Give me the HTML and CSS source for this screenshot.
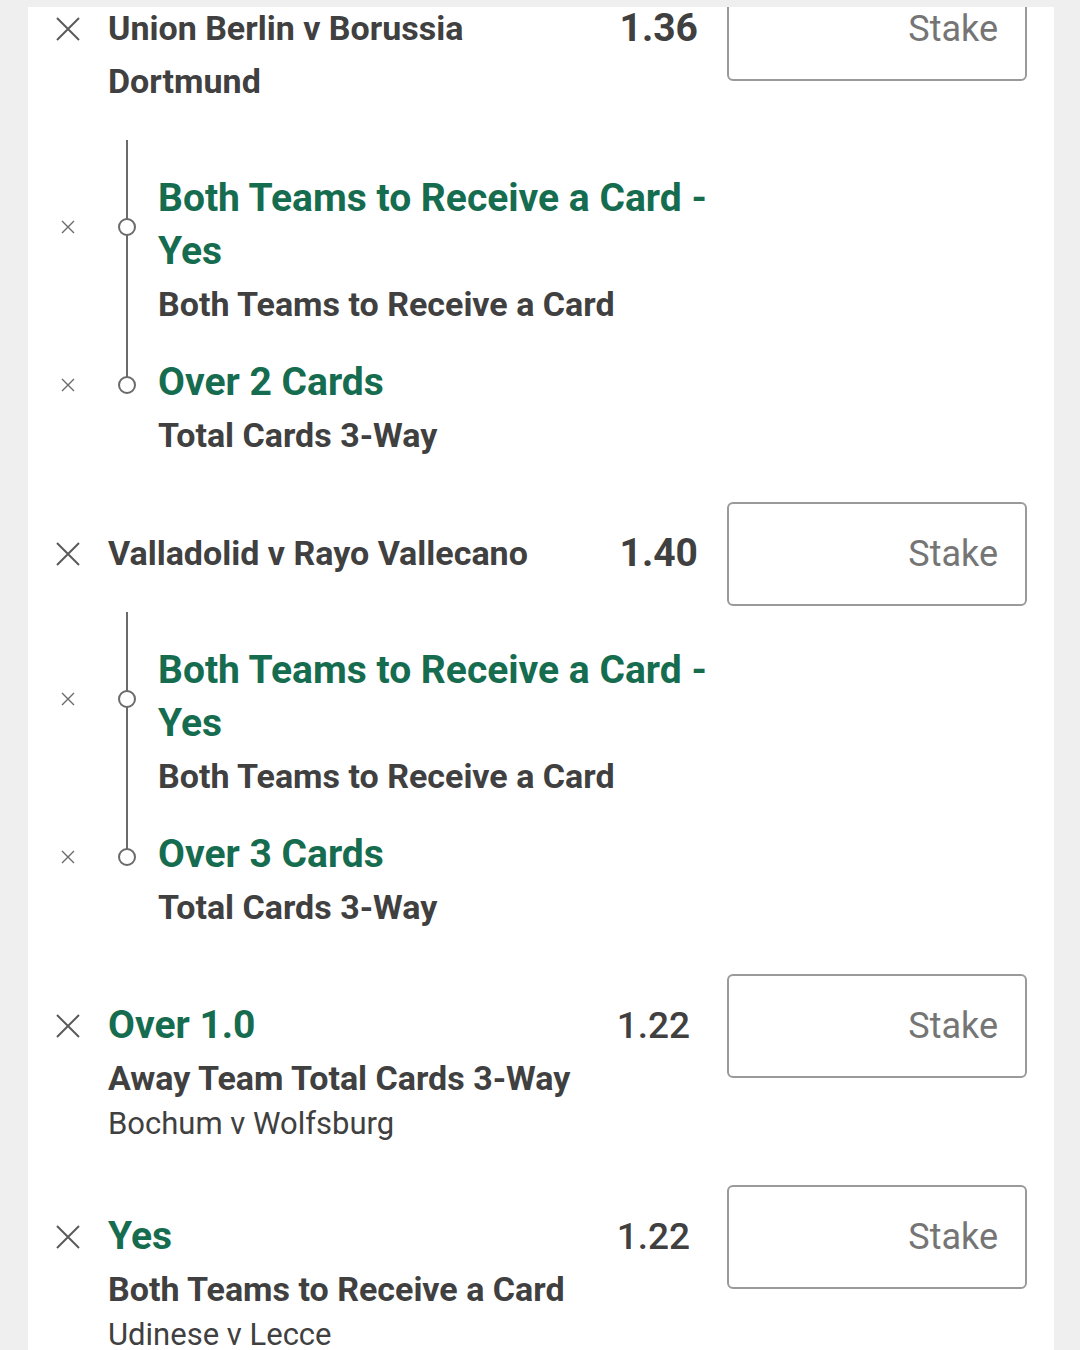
FILE: index.html
```html
<!DOCTYPE html>
<html lang="en">
<head>
<meta charset="utf-8">
<title>Bet slip</title>
<link rel="stylesheet" href="styles.css">
</head>
<body>
<div class="topbar"></div>
<main class="card">

  <section class="bet bet--first">
    <div class="row">
      <span class="x-big"><svg viewBox="0 0 24 24" width="24" height="24"><path d="M1 1L23 23M23 1L1 23"/></svg></span>
      <div class="txt"><div class="title">Union Berlin v Borussia Dortmund</div></div>
      <div class="odds">1.36</div>
      <div class="stake">Stake</div>
    </div>
    <div class="legs">
      <div class="spacer"></div>
      <div class="line"></div>
      <span class="x-small r1"><svg viewBox="0 0 14 14" width="14" height="14"><path d="M1 1L13 13M13 1L1 13"/></svg></span>
      <span class="dot r1"></span>
      <div class="leg-title r1">Both Teams to Receive a Card - Yes</div>
      <div class="leg-market r2 gap">Both Teams to Receive a Card</div>
      <span class="x-small r3"><svg viewBox="0 0 14 14" width="14" height="14"><path d="M1 1L13 13M13 1L1 13"/></svg></span>
      <span class="dot r3"></span>
      <div class="leg-title r3">Over 2 Cards</div>
      <div class="leg-market r4">Total Cards 3-Way</div>
    </div>
  </section>

  <section class="bet">
    <div class="row">
      <span class="x-big"><svg viewBox="0 0 24 24" width="24" height="24"><path d="M1 1L23 23M23 1L1 23"/></svg></span>
      <div class="txt"><div class="title">Valladolid v Rayo Vallecano</div></div>
      <div class="odds">1.40</div>
      <div class="stake">Stake</div>
    </div>
    <div class="legs">
      <div class="spacer"></div>
      <div class="line"></div>
      <span class="x-small r1"><svg viewBox="0 0 14 14" width="14" height="14"><path d="M1 1L13 13M13 1L1 13"/></svg></span>
      <span class="dot r1"></span>
      <div class="leg-title r1">Both Teams to Receive a Card - Yes</div>
      <div class="leg-market r2 gap">Both Teams to Receive a Card</div>
      <span class="x-small r3"><svg viewBox="0 0 14 14" width="14" height="14"><path d="M1 1L13 13M13 1L1 13"/></svg></span>
      <span class="dot r3"></span>
      <div class="leg-title r3">Over 3 Cards</div>
      <div class="leg-market r4">Total Cards 3-Way</div>
    </div>
  </section>

  <section class="bet">
    <div class="row">
      <span class="x-big"><svg viewBox="0 0 24 24" width="24" height="24"><path d="M1 1L23 23M23 1L1 23"/></svg></span>
      <div class="txt">
        <div class="sel">Over 1.0</div>
        <div class="market">Away Team Total Cards 3-Way</div>
        <div class="event">Bochum v Wolfsburg</div>
      </div>
      <div class="odds odds--single">1.22</div>
      <div class="stake">Stake</div>
    </div>
  </section>

  <section class="bet">
    <div class="row">
      <span class="x-big"><svg viewBox="0 0 24 24" width="24" height="24"><path d="M1 1L23 23M23 1L1 23"/></svg></span>
      <div class="txt">
        <div class="sel">Yes</div>
        <div class="market">Both Teams to Receive a Card</div>
        <div class="event">Udinese v Lecce</div>
      </div>
      <div class="odds odds--single">1.22</div>
      <div class="stake">Stake</div>
    </div>
  </section>

</main>
</body>
</html>
```

FILE: styles.css
```css
html, body {
  margin: 0;
  padding: 0;
}
body {
  background: #efefef;
  font-family: Roboto, "Liberation Sans", Arial, sans-serif;
  color: #404040;
  overflow: hidden;
  height: 1350px;
}
.topbar {
  position: fixed;
  top: 0;
  left: 0;
  right: 0;
  height: 7px;
  background: #efefef;
  z-index: 2;
}
.card {
  display: flex;
  flex-direction: column;
  margin: 7px 26px 0 28px;
  padding: 0 27px 0 28px;
  background: #fff;
  min-height: 1400px;
}
.bet {
  margin-top: 41px;
}
.bet--first {
  margin-top: -30px;
}
.row {
  display: grid;
  grid-template-columns: 52px minmax(0, 1fr) 139px 300px;
  align-items: start;
}
.x-big {
  display: block;
  width: 24px;
  height: 24px;
  margin-top: 40px;
}
.x-big svg, .x-small svg {
  display: block;
  fill: none;
  stroke: #5a5a5a;
}
.x-big svg { stroke-width: 2; }
.x-small svg { stroke-width: 1.4; stroke: #6a6a6a; }
.txt {
  padding-top: 25px;
}
.title {
  font-size: 34px;
  font-weight: 700;
  line-height: 53px;
}
.odds {
  padding-top: 25px;
  padding-right: 29px;
  font-size: 39px;
  font-weight: 700;
  line-height: 53px;
  text-align: right;
}
.odds--single {
  font-size: 37px;
  font-weight: 500;
  padding-right: 37px;
}
.stake {
  margin-bottom: -30px;
  height: 104px;
  box-sizing: border-box;
  border: 2px solid #9a9a9a;
  border-radius: 6px;
  display: flex;
  align-items: center;
  justify-content: flex-end;
  padding-right: 27px;
  font-size: 36px;
  color: #757575;
}
.sel {
  font-size: 39px;
  font-weight: 700;
  color: #166c4f;
  line-height: 53px;
}
.market {
  font-size: 34px;
  font-weight: 700;
  line-height: 52px;
}
.event {
  font-size: 31px;
  line-height: 40px;
}
.legs {
  margin-top: 32px;
  display: grid;
  grid-template-columns: 52px 50px minmax(0, 580px);
  grid-template-rows: 32px auto auto auto auto;
}
.spacer {
  grid-column: 1 / -1;
  grid-row: 1;
}
.line {
  grid-column: 2;
  grid-row: 1 / 5;
  width: 2px;
  margin-left: 18px;
  margin-bottom: 24px;
  background: #6a6a6a;
}
.r1 { grid-row: 2; }
.r2 { grid-row: 3; }
.r3 { grid-row: 4; }
.r4 { grid-row: 5; }
.x-small {
  grid-column: 1;
  align-self: center;
  width: 14px;
  height: 14px;
  margin-left: 5px;
  margin-top: 4px;
}
.dot {
  grid-column: 2;
  align-self: center;
  width: 18px;
  height: 18px;
  box-sizing: border-box;
  margin-left: 10px;
  margin-top: 4px;
  border: 2px solid #6a6a6a;
  border-radius: 50%;
  background: #fff;
}
.leg-title {
  grid-column: 3;
  font-size: 39px;
  font-weight: 700;
  color: #166c4f;
  line-height: 53px;
}
.leg-market {
  grid-column: 3;
  font-size: 34px;
  font-weight: 700;
  line-height: 52px;
}
.leg-market.gap {
  padding-bottom: 26px;
}
```
